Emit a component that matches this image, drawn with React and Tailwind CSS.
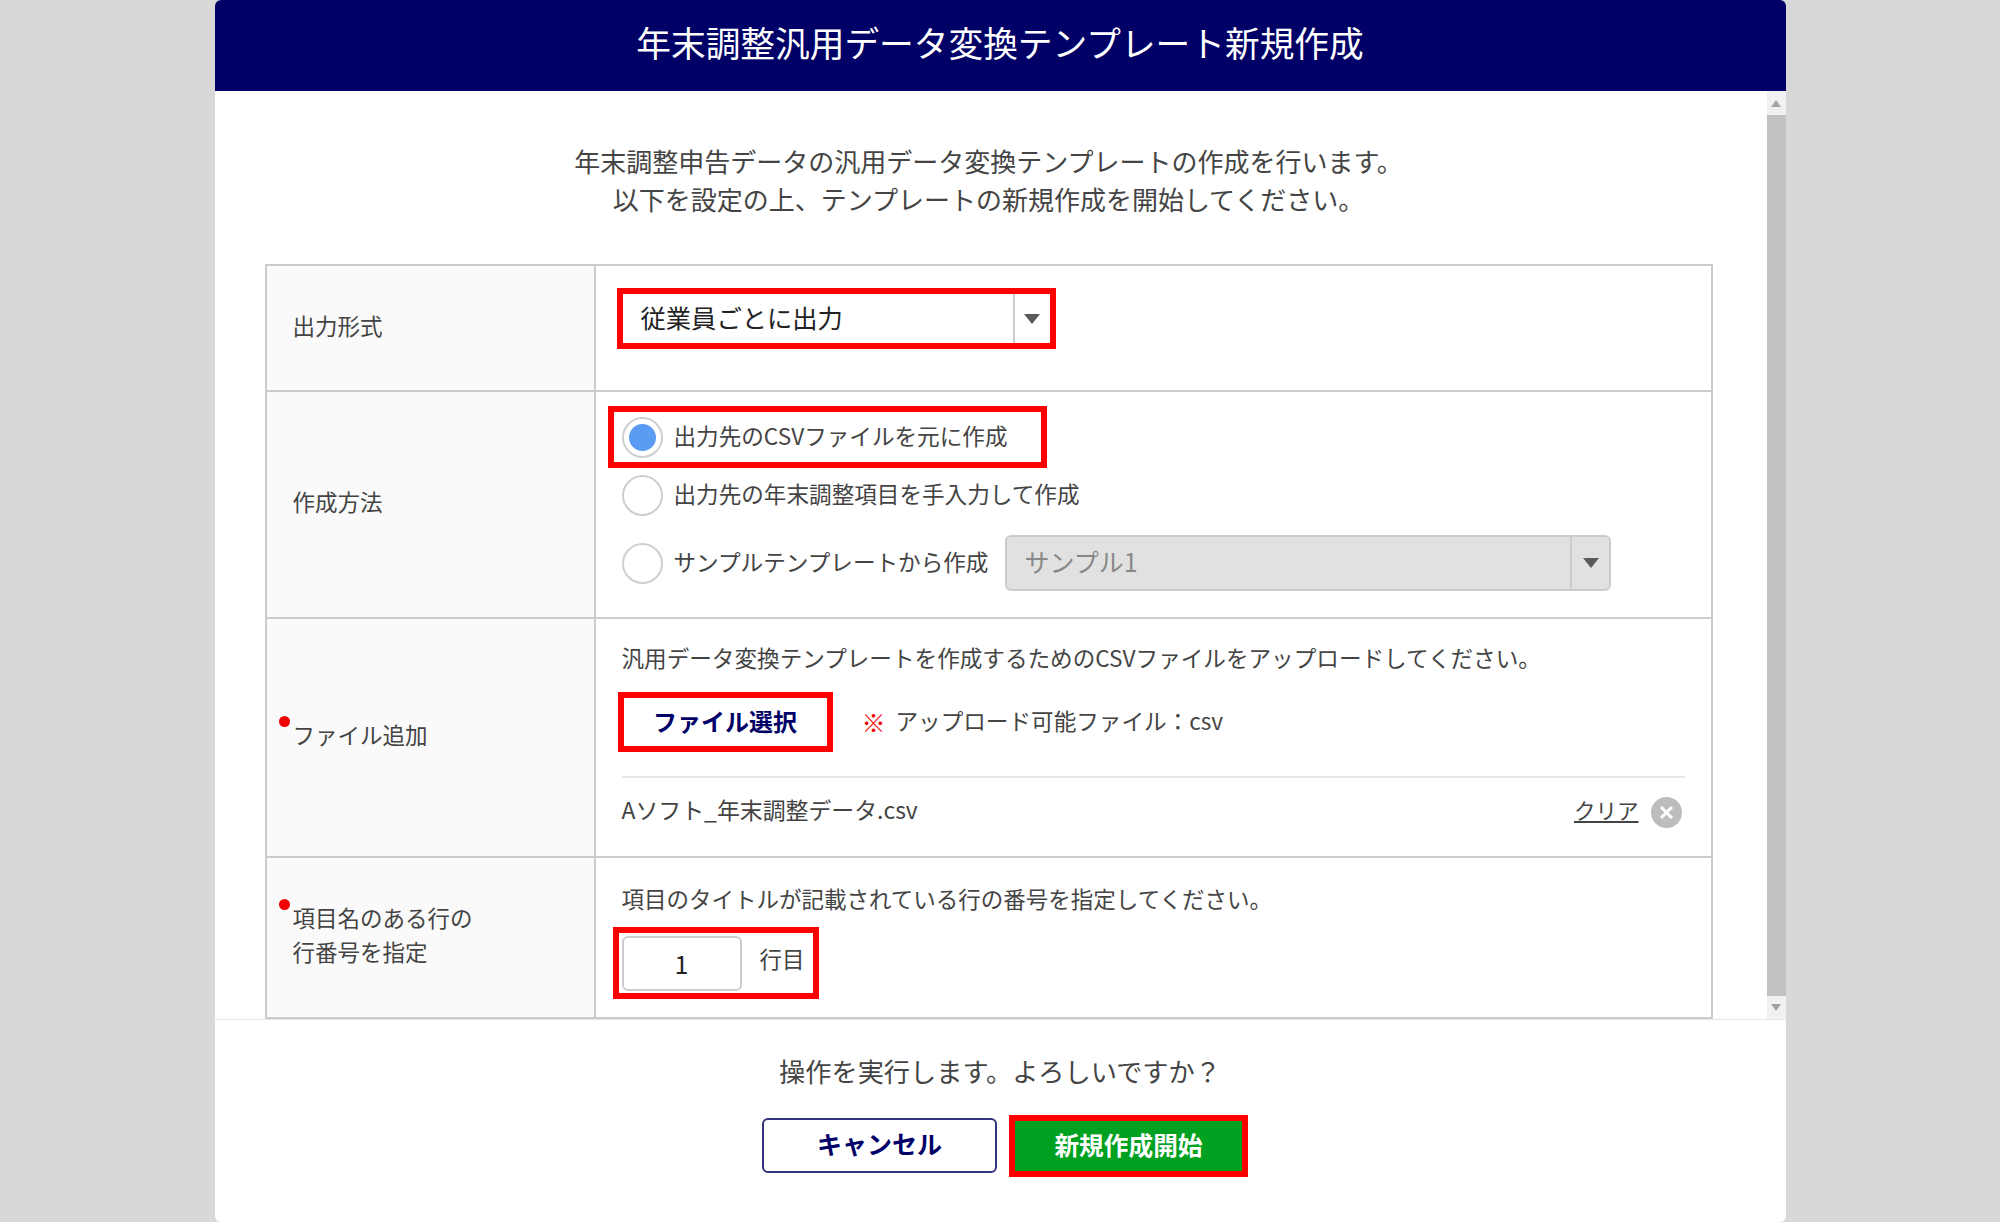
import React from "react";

const Arrow = () => (
  <svg width="16" height="10" viewBox="0 0 16 10" className="block">
    <polygon points="0,0 16,0 8,10" fill="#5a5a5a" />
  </svg>
);

const Radio = ({ on }) => (
  <span className="flex h-[41px] w-[41px] shrink-0 items-center justify-center rounded-full border-2 border-[#cfcfcf] bg-white">
    {on && <span className="h-[27px] w-[27px] rounded-full bg-[#5a9bf3]" />}
  </span>
);

const Label = ({ children, required }) => (
  <div className="flex w-[329px] shrink-0 items-center border-r-2 border-[#cccccc] bg-[#fafafa] pb-[7px] pl-[26px] text-[22.5px] leading-[34px] text-[#444444]">
    <div className="relative">
      {required && (
        <span className="absolute left-[-14px] top-[-1px] h-[11px] w-[11px] rounded-full bg-[#f00000]" />
      )}
      {children}
    </div>
  </div>
);

export default function App() {
  return (
    <div className="flex h-[1222px] w-[2000px] justify-center overflow-hidden bg-[#d8d8d8] font-['Noto_Sans_CJK_JP','Liberation_Sans',sans-serif]">
      <div className="flex h-[1222px] w-[1571px] flex-col overflow-hidden rounded-[6px] bg-white">
        <header className="flex h-[91px] shrink-0 items-center justify-center bg-[#000066] pb-[6px] text-[34.7px] text-white">
          年末調整汎用データ変換テンプレート新規作成
        </header>

        <div className="flex h-[928px] shrink-0">
          <div className="flex-1 pl-[50px] pr-[54px]">
            <div className="pt-[51px] text-center text-[26px] leading-[38px] text-[#444444]">
              <p>年末調整申告データの汎用データ変換テンプレートの作成を行います。</p>
              <p>以下を設定の上、テンプレートの新規作成を開始してください。</p>
            </div>

            <div className="mt-[46px] border-2 border-[#cccccc]">
              <div className="flex h-[126px] border-b-2 border-[#cccccc]">
                <Label>出力形式</Label>
                <div className="flex-1 pl-[21px] pt-[22px]">
                  <div className="flex h-[61px] w-[439px] items-stretch border-[6px] border-[#ff0000] bg-white">
                    <div className="flex flex-1 items-center pb-[2px] pl-[18px] text-[25.3px] text-[#222222]">
                      従業員ごとに出力
                    </div>
                    <div className="flex w-[37px] items-center justify-center border-l-2 border-[#cccccc]">
                      <Arrow />
                    </div>
                  </div>
                </div>
              </div>

              <div className="flex h-[227px] border-b-2 border-[#cccccc]">
                <Label>作成方法</Label>
                <div className="flex-1 pl-[26px] pt-[14px] text-[22.6px] text-[#444444]">
                  <div className="ml-[-14px] flex h-[62px] w-[439px] items-center gap-[11px] border-[6px] border-[#ff0000] pl-[8px]">
                    <Radio on />
                    <span className="pb-[2px]">出力先のCSVファイルを元に作成</span>
                  </div>
                  <div className="mt-[7px] flex items-center gap-[11px]">
                    <Radio />
                    <span className="pb-[3px]">出力先の年末調整項目を手入力して作成</span>
                  </div>
                  <div className="mt-[19px] flex items-center gap-[11px]">
                    <Radio />
                    <span className="mr-[6px] pb-[2px]">サンプルテンプレートから作成</span>
                    <div className="flex h-[56px] w-[606px] items-stretch rounded-[6px] border-2 border-[#cccccc] bg-[#e1e1e1]">
                      <div className="flex flex-1 items-center pb-[2px] pl-[17px] text-[25px] text-[#888888]">
                        サンプル1
                      </div>
                      <div className="flex w-[39px] items-center justify-center border-l-2 border-[#cccccc]">
                        <Arrow />
                      </div>
                    </div>
                  </div>
                </div>
              </div>

              <div className="flex h-[239px] border-b-2 border-[#cccccc]">
                <Label required>ファイル追加</Label>
                <div className="flex-1 pl-[26px] pr-[26px] pt-[24px] text-[22.6px] text-[#444444]">
                  <p className="h-[30px] leading-[30px]">
                    汎用データ変換テンプレートを作成するためのCSVファイルをアップロードしてください。
                  </p>
                  <div className="mt-[19px] flex items-center">
                    <button className="ml-[-4px] flex h-[60px] w-[215px] items-center justify-center border-[6px] border-[#ff0000] bg-white pb-[2px] text-[24px] font-bold text-[#000066]">
                      ファイル選択
                    </button>
                    <span className="ml-[29px] text-[24px] font-bold text-[#f00000]">※</span>
                    <span className="ml-[10px] pb-[3px]">アップロード可能ファイル：csv</span>
                  </div>
                  <div className="mt-[24px] border-t-2 border-[#e6e6e6]" />
                  <div className="mt-[12px] flex h-[40px] items-center justify-between">
                    <span className="pb-[1px] text-[22.9px]">Aソフト_年末調整データ.csv</span>
                    <span className="flex items-center gap-[12px] pr-[3px]">
                      <a className="text-[21.5px] underline">クリア</a>
                      <span className="mt-[4px] flex h-[31px] w-[31px] items-center justify-center rounded-full bg-[#bdbdbd]">
                        <svg width="15" height="15" viewBox="0 0 15 15">
                          <path d="M2 2 L13 13 M13 2 L2 13" stroke="#ffffff" strokeWidth="3" />
                        </svg>
                      </span>
                    </span>
                  </div>
                </div>
              </div>

              <div className="flex h-[159px]">
                <Label required>
                  項目名のある行の
                  <br />
                  行番号を指定
                </Label>
                <div className="flex-1 pl-[26px] pt-[25px] text-[22.5px] text-[#444444]">
                  <p className="h-[30px] leading-[30px]">
                    項目のタイトルが記載されている行の番号を指定してください。
                  </p>
                  <div className="ml-[-9px] mt-[14px] flex h-[72px] w-[206px] items-center border-[6px] border-[#ff0000] pl-[3px]">
                    <div className="flex h-[55px] w-[120px] items-center justify-center rounded-[6px] border-2 border-[#cccccc] bg-white pt-[2px] text-[25px] text-[#222222]">
                      1
                    </div>
                    <span className="ml-[18px] pb-[9px]">行目</span>
                  </div>
                </div>
              </div>
            </div>
          </div>

          <div className="flex w-[19px] shrink-0 flex-col items-center bg-[#f1f1f1]">
            <div className="flex h-[24px] items-center">
              <svg width="10" height="7" viewBox="0 0 10 7">
                <polygon points="5,0 10,7 0,7" fill="#a3a3a3" />
              </svg>
            </div>
            <div className="h-[881px] w-full bg-[#c1c1c1]" />
            <div className="flex h-[23px] items-center">
              <svg width="10" height="7" viewBox="0 0 10 7">
                <polygon points="0,0 10,0 5,7" fill="#a3a3a3" />
              </svg>
            </div>
          </div>
        </div>

        <footer className="border-t border-[#e6e6e6] pt-[32px] text-center">
          <p className="text-[26.2px] leading-[38px] text-[#444444]">操作を実行します。よろしいですか？</p>
          <div className="mt-[25px] flex items-center justify-center gap-[12px] pl-[10px]">
            <button className="mb-[2px] h-[55px] w-[235px] rounded-[6px] border-2 border-[#33337f] bg-white pb-[3px] text-[25px] font-bold text-[#000066]">
              キャンセル
            </button>
            <button className="h-[62px] w-[239px] border-[6px] border-[#ff0000] bg-[#00a020] pb-[3px] text-[24.7px] font-bold text-white">
              新規作成開始
            </button>
          </div>
        </footer>
      </div>
    </div>
  );
}
